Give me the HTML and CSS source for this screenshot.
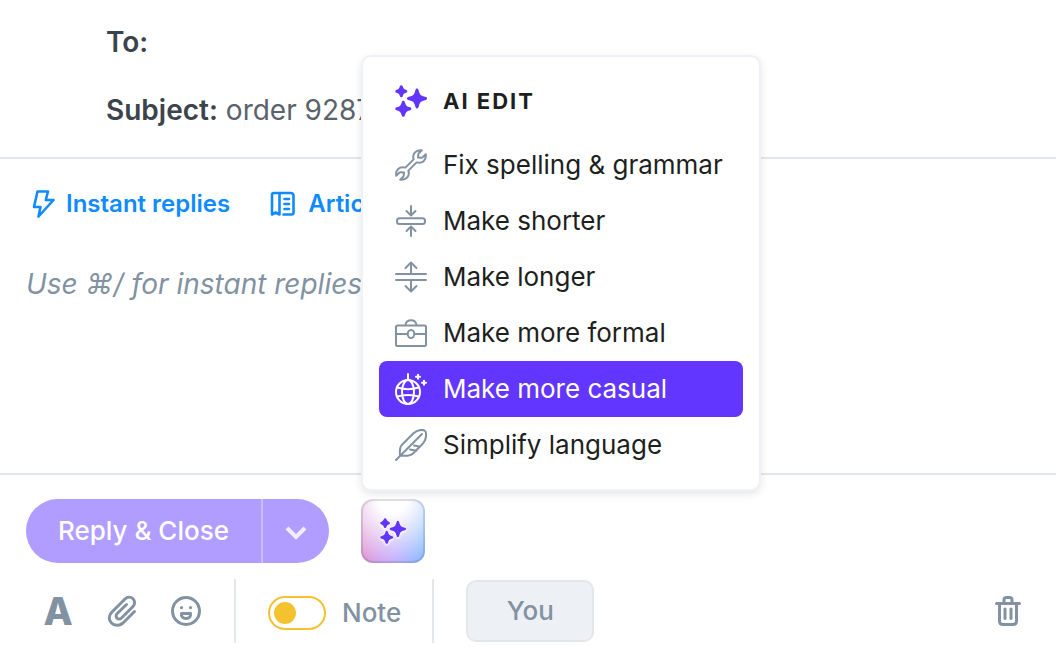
FILE: index.html
```html
<!DOCTYPE html>
<html lang="en">
  <head>
    <title>Reply - order 9287</title>
    <meta charset="UTF-8" />
    <meta name="viewport" content="width=device-width, initial-scale=1.0" />
    <link rel="stylesheet" href="styles.css">
  </head>
  <body>
    <!-- sparkle shape shared by the menu title and the AI button -->
    <svg class="defs" aria-hidden="true">
      <symbol id="sparkles" viewBox="0 0 32 32">
        <path d="M22 5C23.5 11 24.500 12 30.500 13.500C24.500 15 23.500 16 22 22C20.500 16 19.500 15 13.500 13.500C19.500 12 20.500 11 22 5Z" />
        <path d="M6.300 1.800C7.300 4.800 7.800 5.300 10.800 6.300C7.800 7.300 7.300 7.800 6.300 10.800C5.300 7.800 4.800 7.300 1.800 6.300C4.800 5.300 5.300 4.800 6.300 1.800Z" />
        <path d="M8.300 17.300C9.500 21.600 10.500 22.600 14.800 23.800C10.500 25 9.500 26 8.300 30.300C7.100 26 6.100 25 1.800 23.800C6.100 22.600 7.100 21.600 8.300 17.300Z" />
      </symbol>
    </svg>

    <form class="composer">
      <div class="fields">
        <div class="field">
          <label for="to">To:</label>
          <input type="text" id="to">
        </div>
        <div class="field">
          <label for="subject">Subject:</label>
          <input type="text" id="subject" value="order 9287">
        </div>
      </div>

      <div class="editor">
        <div class="shortcuts">
          <button type="button" class="shortcut">
            <svg class="bolt-icon" viewBox="0 0 24 28" width="24" height="28" stroke-width="2.6">
              <path d="M5.5 1.5H16L13.8 10H21.5L6.5 26.5L8.5 17H2Z" />
            </svg>
            Instant replies
          </button>
          <button type="button" class="shortcut">
            <svg viewBox="0 0 26 26" width="26" height="26" stroke-width="2.6">
              <path d="M13.5 23.5H21.5Q23.5 23.5 23.5 21.5V5Q23.5 2 20.5 2H4Q2 2 2 4V23.5L5.7 21.5L9.5 23.5V2M14.5 8H19M14.5 13H19M14.5 18H19" />
            </svg>
            Articles
          </button>
        </div>
        <textarea aria-label="Message" placeholder="Use ⌘/ for instant replies"></textarea>
      </div>

      <div class="actions">
        <div class="split-button">
          <button type="button" class="reply">Reply &amp; Close</button>
          <button type="button" class="more" aria-label="More options">
            <svg viewBox="0 0 22 14" width="22" height="14" stroke-width="4"><path d="M2 2l9 9 9-9" /></svg>
          </button>
        </div>

        <div class="ai">
          <button type="button" class="ai-button" aria-label="AI edit">
            <svg class="sparkles" width="26" height="26" stroke-width="3"><use href="#sparkles" /></svg>
          </button>

          <div class="menu">
            <h2 class="menu-title">
              <svg class="sparkles" width="32" height="32" stroke-width="3"><use href="#sparkles" /></svg>
              AI EDIT
            </h2>
            <button type="button" class="menu-item">
              <svg viewBox="0 0 32 32" width="32" height="32" stroke-width="2">
                <path d="M18.6 10.4C17 5 20.5 0.6 26.8 1.2L23.8 4.2C22.6 5.6 23.6 6.6 23 8.6C25.2 8.2 26.2 9.4 27.8 8.2L30.8 5.2C31.6 11.5 27.2 15 21.6 13.4L13.4 21.6C15 27 11.5 31.4 5.2 30.8L8.2 27.8C9.4 26.4 8.4 25.4 9 23.4C6.8 23.8 5.8 22.6 4.2 23.8L1.2 26.8C0.4 20.5 4.8 17 10.4 18.6Z" />
              </svg>
              Fix spelling &amp; grammar
            </button>
            <button type="button" class="menu-item">
              <svg viewBox="0 0 32 32" width="32" height="32" stroke-width="2">
                <rect x="2" y="13.3" width="28" height="5.6" rx="2.5" />
                <path d="M16 1v9M11.5 6l4.5 4.5L20.5 6M16 31v-9M11.5 26l4.5-4.5 4.5 4.5" />
              </svg>
              Make shorter
            </button>
            <button type="button" class="menu-item">
              <svg viewBox="0 0 32 32" width="32" height="32" stroke-width="2">
                <path d="M1 13h30M1 19h30M16 13V1.5M10.5 7L16 1.5 21.5 7M16 19v11.5M10.5 25l5.5 5.5 5.5-5.5" />
              </svg>
              Make longer
            </button>
            <button type="button" class="menu-item">
              <svg viewBox="0 0 32 32" width="32" height="32" stroke-width="2">
                <rect x="1" y="8.5" width="30" height="20.5" rx="1.5" />
                <path d="M10.5 8C11 1.5 21 1.5 21.5 8M1 17h11.5M19.5 17H31" />
                <ellipse cx="16" cy="17" rx="3.3" ry="4" />
              </svg>
              Make more formal
            </button>
            <button type="button" class="menu-item selected">
              <svg viewBox="0 0 32 32" width="32" height="32" stroke-width="2">
                <circle cx="13" cy="19" r="12" />
                <ellipse cx="13" cy="19" rx="6" ry="12" />
                <path d="M13 1v6M2.5 14.5Q13 18 23.5 14.5M2.5 23.5Q13 20.5 23.5 23.5M23 1.7v4M21 3.7h4M29 7.7v4M27 9.7h4" />
              </svg>
              Make more casual
            </button>
            <button type="button" class="menu-item">
              <svg viewBox="0 0 32 32" width="32" height="32" stroke-width="2">
                <path d="M1 31L27 5M5 26.5C4.5 21 4.5 18.5 6.5 16.3L18.5 4.3C23 0 31 -0.5 31 4.5C31.5 9.5 30 12.5 27 15.5L18.5 24C15.5 27 12 27.5 5.5 26.5M19 16.5l5.5 1M15 20.5l6.5 1.3" />
              </svg>
              Simplify language
            </button>
          </div>
        </div>
      </div>

      <div class="toolbar">
        <button type="button" class="tool letter">A</button>
        <button type="button" class="tool" aria-label="Attach file">
          <svg viewBox="0 0 32 32" width="32" height="32" stroke-width="3">
            <path d="M28.5 16.5L17 28C13 31.5 8 30.5 5.5 28C2.5 25 2.5 20.5 5.5 17.5L19 4C21.5 1.5 25 1.8 27 3.8C29.2 6 29 9.5 27 11.5L15.5 23C14 24.5 12 24.3 11 23.2C9.7 22 9.8 20 11 18.8L20.5 9.5" />
          </svg>
        </button>
        <button type="button" class="tool" aria-label="Insert emoji">
          <svg viewBox="0 0 32 32" width="32" height="32" stroke-width="3">
            <circle cx="16" cy="16" r="13.5" />
            <path d="M11.5 18.5h9C21 22 19 23.5 16 23.5S11 22 11.5 18.5Z" />
            <path d="M11.5 12.5v.2M20.5 12.5v.2" />
          </svg>
        </button>
        <span class="divider"></span>
        <label class="note"><input type="checkbox" class="toggle">Note</label>
        <span class="divider"></span>
        <button type="button" class="you">You</button>
        <button type="button" class="trash" aria-label="Delete draft">
          <svg viewBox="0 0 26 32" width="26" height="32" stroke-width="3">
            <path d="M1.5 8.5h23M4.5 8.5V26Q4.5 29.5 8 29.5h10Q21.5 29.5 21.5 26V8.5M9 8V5Q9 2.5 11.5 2.5h3Q17 2.5 17 5V8M10 14v9.5M16 14v9.5" />
          </svg>
        </button>
      </div>
    </form>
  </body>
</html>
```

FILE: styles.css
```css
* {
  box-sizing: border-box;
}
body {
  margin: 0;
  font-family: Inter, "Liberation Sans", sans-serif;
  font-size: 26px;
  line-height: 32px;
  color: #3c444b;
  background-color: #fff;
}
button, input, textarea {
  font: inherit;
  color: inherit;
  background: none;
  border: none;
  padding: 0;
  outline: none;
}
button {
  cursor: pointer;
}
svg {
  flex: none;
  fill: none;
  stroke: currentColor;
  stroke-linecap: round;
  stroke-linejoin: round;
}
.defs {
  display: none;
}
.composer {
  display: flex;
  flex-direction: column;
  min-height: 100vh;
}

/* To / Subject */
.fields {
  display: flex;
  flex-direction: column;
  gap: 32px;
  padding: 24px 26px 29px 106px;
  border-bottom: 2px solid #e3e7ea;
}
.field {
  display: flex;
  gap: 8px;
  font-size: 28px;
  line-height: 36px;
}
.field label {
  font-weight: 600;
}
.field input {
  flex: 1;
  min-width: 0;
  height: 36px;
  color: #5a636c;
}

/* Message */
.editor {
  flex: 1;
  display: flex;
  flex-direction: column;
  gap: 48px;
  padding: 29px 26px;
}
.shortcuts {
  display: flex;
  gap: 40px;
  padding-left: 6px;
}
.shortcut {
  display: flex;
  align-items: center;
  gap: 12px;
  color: #0f8bff;
  font-size: 24px;
  font-weight: 600;
}
.shortcut .bolt-icon {
  margin-right: -2px;
}
textarea {
  flex: 1;
  width: 100%;
  resize: none;
  font-size: 28px;
}
textarea::placeholder {
  color: #8292a2;
  font-style: italic;
}

/* Reply buttons */
.actions {
  display: flex;
  gap: 32px;
  padding: 24px 26px 16px;
  border-top: 2px solid #e3e7ea;
}
.split-button {
  display: flex;
  height: 64px;
  color: #fff;
  font-weight: 500;
}
.reply, .more {
  background-color: #b09dff;
}
.reply {
  padding: 0 32px;
  border-radius: 32px 0 0 32px;
}
.more {
  width: 68px;
  border-left: 2px solid #c9bcff;
  border-radius: 0 32px 32px 0;
}
.more svg {
  stroke: #f1eeff;
  stroke-linecap: butt;
  stroke-linejoin: miter;
}
.sparkles {
  fill: #6236ff;
  stroke: #6236ff;
}
.ai {
  position: relative;
}
.ai-button {
  display: flex;
  align-items: center;
  justify-content: center;
  width: 64px;
  height: 64px;
  border: 2px solid rgba(70, 80, 110, 0.18);
  border-radius: 12px;
  background:
    radial-gradient(circle at 50% 0, #fff 20%, rgba(255, 255, 255, 0) 100%),
    linear-gradient(90deg, #e08fce, #bda0ff 50%, #7db8ff);
  background-origin: border-box;
}
.ai-button .sparkles {
  filter: drop-shadow(0 0 1px #fff) drop-shadow(0 1px 1px #fff);
}

/* AI menu */
.menu {
  position: absolute;
  left: 0;
  bottom: calc(100% + 8px);
  width: 400px;
  padding: 16px;
  background-color: #fff;
  border: 2px solid #eef1f6;
  border-radius: 10px;
  box-shadow: 0 3px 8px rgba(0, 0, 0, 0.1);
  color: #1d1f21;
}
.menu-title, .menu-item {
  display: flex;
  align-items: center;
  gap: 16px;
  width: 100%;
  height: 56px;
  padding: 0 16px;
}
.menu-title {
  margin: 0 0 8px;
  font-size: 22px;
  font-weight: 700;
  letter-spacing: 2px;
}
.menu-item {
  border-radius: 8px;
  white-space: nowrap;
}
.menu-item svg {
  color: #8292a2;
}
.menu-item.selected, .menu-item.selected svg {
  background-color: #6236ff;
  color: #fff;
}

/* Bottom toolbar */
.toolbar {
  display: flex;
  align-items: center;
  height: 64px;
  margin: 0 26px 17px;
  color: #8292a2;
  font-weight: 500;
}
.tool {
  display: flex;
  align-items: center;
  justify-content: center;
  width: 64px;
  height: 64px;
}
.letter {
  font-size: 38px;
  font-weight: 800;
}
.divider {
  width: 2px;
  height: 64px;
  margin: 0 32px 0 31px;
  background-color: #e3e7ea;
}
.tool + .divider {
  margin-left: 16px;
}
.note {
  display: flex;
  align-items: center;
  gap: 16px;
  padding-top: 4px;
}
.toggle {
  appearance: none;
  width: 58px;
  height: 34px;
  margin: 0;
  padding: 4px;
  border: 2px solid #f4c22f;
  border-radius: 17px;
}
.toggle::before {
  content: "";
  display: block;
  width: 22px;
  height: 22px;
  border-radius: 50%;
  background-color: #f4c22f;
}
.toggle:checked::before {
  margin-left: auto;
}
.you {
  width: 128px;
  height: 62px;
  background-color: #edf0f5;
  border: 2px solid #e3e7ea;
  border-radius: 10px;
}
.trash {
  display: flex;
  margin-left: auto;
  padding: 0 9px;
}
```
